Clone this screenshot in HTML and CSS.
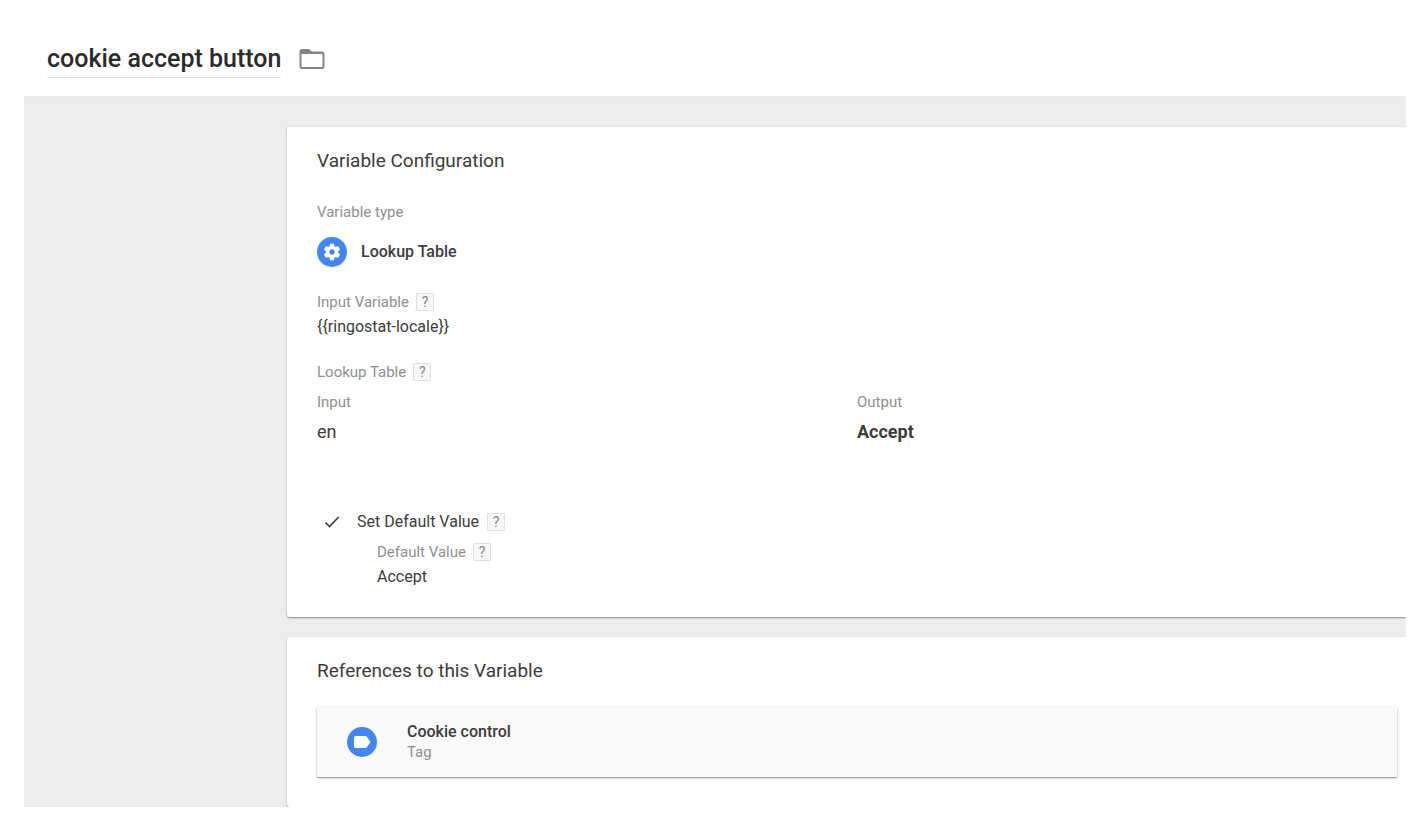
FILE: index.html
```html
<!DOCTYPE html>
<html lang="en">
<head>
<meta charset="utf-8">
<title>cookie accept button</title>
<link rel="stylesheet" href="styles.css">
</head>
<body>
<header class="header">
  <h1 class="title">cookie accept button</h1>
  <button class="folder" type="button" aria-label="Move to folder">
    <svg viewBox="0 0 26 22" width="26" height="22" aria-hidden="true"><path d="M3 1h7l3 2.500h10q2.500 0 2.500 2.500v12.500q0 2.500-2.500 2.500H3q-2.500 0-2.500-2.500v-15Q.5 1 3 1zM2.500 6v12.500q0 .5.500.5h20q.5 0 .5-.5V6z" fill="#858585" fill-rule="evenodd"/></svg>
  </button>
</header>
<main class="canvas">
  <section class="card">
    <h2 class="card-title">Variable Configuration</h2>
    <div class="label">Variable type</div>
    <div class="type">
      <svg viewBox="0 0 30 30" width="30" height="30" aria-hidden="true"><circle cx="15" cy="15" r="15" fill="#4285f4"/><g transform="translate(5.100 5.100) scale(.825)"><path fill="#fff" d="M19.430 12.980c.04-.32.070-.64.070-.98s-.03-.66-.07-.98l2.110-1.650c.19-.15.240-.42.120-.64l-2-3.460c-.12-.22-.39-.3-.61-.22l-2.490 1c-.52-.4-1.080-.73-1.690-.98l-.38-2.650C14.460 2.180 14.250 2 14 2h-4c-.25 0-.46.180-.49.420l-.38 2.650c-.61.250-1.170.59-1.690.98l-2.490-1c-.23-.09-.49 0-.61.220l-2 3.460c-.13.220-.07.490.120.640l2.110 1.650c-.04.320-.07.650-.07.980s.03.660.07.980l-2.110 1.650c-.19.150-.24.420-.12.640l2 3.460c.12.220.39.300.61.220l2.490-1c.52.400 1.080.730 1.690.980l.38 2.650c.03.240.24.420.49.420h4c.25 0 .46-.18.490-.42l.38-2.650c.61-.25 1.170-.59 1.690-.98l2.490 1c.23.090.49 0 .61-.22l2-3.460c.12-.22.070-.49-.12-.64l-2.110-1.650zM12 15.200a3.200 3.200 0 1 1 0-6.400 3.200 3.200 0 0 1 0 6.400z"/></g></svg>
      <span class="strong">Lookup Table</span>
    </div>
    <div class="label">Input Variable <button class="help" type="button" aria-label="Help on Input Variable">?</button></div>
    <div class="value">{{ringostat-locale}}</div>
    <div class="label label-next">Lookup Table <button class="help" type="button" aria-label="Help on Lookup Table">?</button></div>
    <table class="lookup">
      <thead><tr><th>Input</th><th>Output</th></tr></thead>
      <tbody><tr><td>en</td><td class="output">Accept</td></tr></tbody>
    </table>
    <div class="default">
      <svg class="check" viewBox="0 0 16 14" width="16" height="14" aria-hidden="true"><path d="M1.500 7.500l4 4L14.700 2" fill="none" stroke="#3c3c3c" stroke-width="1.600"/></svg>
      <span>Set Default Value</span>
      <button class="help" type="button" aria-label="Help on Set Default Value">?</button>
    </div>
    <div class="nested">
      <div class="label">Default Value <button class="help" type="button" aria-label="Help on Default Value">?</button></div>
      <div class="value">Accept</div>
    </div>
  </section>
  <section class="card card-last">
    <h2 class="card-title">References to this Variable</h2>
    <div class="reference">
      <svg viewBox="0 0 30 30" width="30" height="30" aria-hidden="true"><circle cx="15" cy="15" r="15" fill="#4285f4"/><path d="M8.500 9h9.800q1 0 1.600.8L23.500 15l-3.600 5.200q-.6.8-1.600.8H8.500Q7 21 7 19.500v-9Q7 9 8.500 9z" fill="#fff"/></svg>
      <div>
        <div class="strong">Cookie control</div>
        <div class="label">Tag</div>
      </div>
    </div>
  </section>
</main>
</body>
</html>
```
FILE: styles.css
```css
* { box-sizing: border-box; }

body {
  margin: 0;
  background: #fff;
  color: #3c3c3c;
  font: 16px/20px Roboto, "Liberation Sans", sans-serif;
}

h1, h2 { margin: 0; }

button {
  padding: 0;
  border: 0;
  background: none;
  font: inherit;
}

.header {
  display: flex;
  align-items: flex-start;
  gap: 18px;
  height: 96px;
  padding: 40px 47px 0;
}

.title {
  border-bottom: 1px solid #e0e0e0;
  color: #2b2b2b;
  font-size: 25px;
  font-weight: 500;
  line-height: 37px;
}

.folder {
  display: flex;
  margin-top: 8px;
}

.canvas {
  display: flex;
  flex-direction: column;
  gap: 20px;
  margin: 0 20px 20px 24px;
  padding: 30px 0 0 263px;
  border-top: 1px solid #e9e9e9;
  background: #ededed;
  overflow: hidden;
}

.card {
  padding: 20px 9px 25px 30px;
  border-radius: 3px 0 0 3px;
  background: #fff;
  box-shadow: 0 1px 1px #00000040, 0 1px 3px #00000033;
}

.card-last { padding-bottom: 30px; }

.card-title {
  margin-bottom: 27px;
  font-size: 19px;
  font-weight: 400;
  line-height: 28px;
}

.label {
  display: flex;
  align-items: center;
  gap: 7px;
  color: #8f8f8f;
  font-size: 15px;
}

.label-next { margin-top: 20px; }

.type {
  display: flex;
  align-items: center;
  gap: 14px;
  margin: 15px 0 25px;
}

.strong { font-weight: 500; }

.help {
  width: 18px;
  height: 18px;
  border: 1px solid #e0e0e0;
  border-radius: 1px;
  background: #f7f7f7;
  color: #858585;
  font-size: 14px;
  line-height: 16px;
}

.value { line-height: 30px; }

.lookup {
  width: 100%;
  margin-top: 5px;
  border-collapse: collapse;
  table-layout: fixed;
}

.lookup th,
.lookup td {
  height: 30px;
  padding: 0;
  text-align: left;
}

.lookup th {
  color: #8f8f8f;
  font-size: 15px;
  font-weight: 400;
}

.lookup td { font-size: 18px; }

.lookup .output { font-weight: 700; }

.default {
  display: flex;
  align-items: center;
  gap: 8px;
  height: 30px;
  margin: 60px 0 5px;
  padding-left: 7px;
}

.check { margin-right: 9px; }

.nested { padding-left: 60px; }

.reference {
  display: flex;
  align-items: center;
  gap: 30px;
  margin-top: -5px;
  padding: 15px 30px;
  background: #fafafa;
  box-shadow: 0 1px 1px #00000040, 0 1px 3px #00000033;
}
```
